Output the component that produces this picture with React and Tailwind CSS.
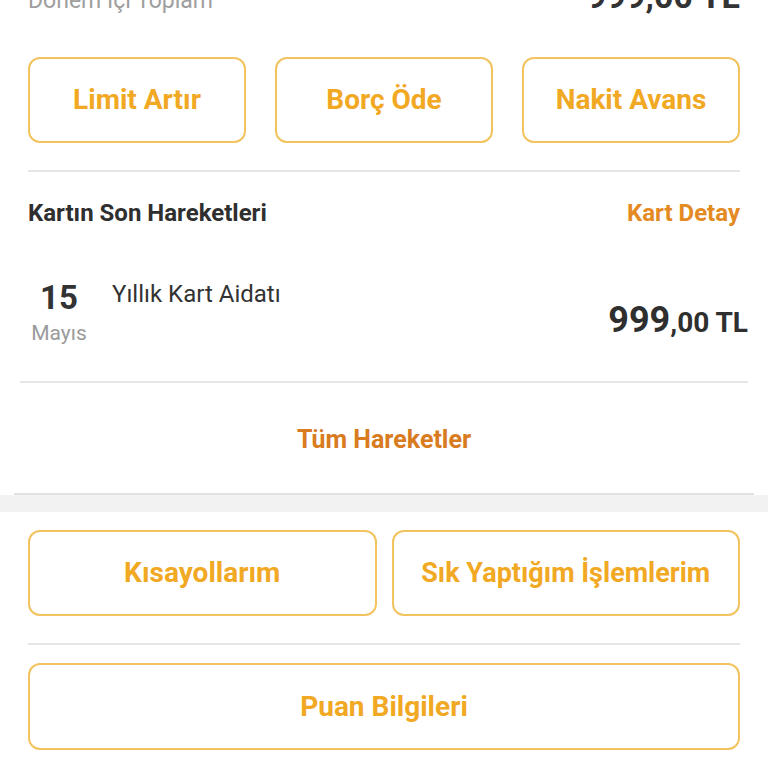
export default function App() {
  const font = { fontFamily: "Roboto, 'Noto Sans', sans-serif" };
  const btn =
    "flex items-center justify-center rounded-[12px] border-2 border-[#f2c35e] bg-white font-bold text-[#f1a823]";

  return (
    <div className="w-[768px] h-[768px] overflow-hidden bg-white" style={font}>
      <div className="px-7">
        <div className="flex items-end justify-between h-[16px] -mt-[4px]">
          <span className="text-[23px] leading-[26px] text-[#9e9e9e] translate-y-[2px]">Dönem İçi Toplam</span>
          <span className="text-[34px] leading-[38px] font-bold text-[#333] translate-y-[3px]">999,00 TL</span>
        </div>

        <div className="grid grid-cols-3 gap-[29px] mt-[45px]">
          <button className={`${btn} h-[86px] text-[28px]`}>Limit Artır</button>
          <button className={`${btn} h-[86px] text-[28px]`}>Borç Öde</button>
          <button className={`${btn} h-[86px] text-[28px]`}>Nakit Avans</button>
        </div>

        <div className="h-[2px] bg-[#e6e6e6] mt-[27px]" />

        <div className="flex items-center justify-between mt-[27px]">
          <span className="text-[24px] leading-[28px] font-bold text-[#2f2f2f]">Kartın Son Hareketleri</span>
          <span className="text-[24px] leading-[28px] font-bold text-[#e48a22]">Kart Detay</span>
        </div>
      </div>

      <div className="px-5">
        <div className="flex mt-[53px] pb-[34px] border-b-2 border-[#e6e6e6]">
          <div className="w-[78px] flex flex-col items-center">
            <span className="text-[33px] leading-[36px] font-bold text-[#333]">15</span>
            <span className="text-[21px] leading-[26px] text-[#9a9a9a] mt-[4px]">Mayıs</span>
          </div>
          <div className="flex-1 flex justify-between pl-[14px]">
            <span className="text-[24px] leading-[28px] text-[#333]">Yıllık Kart Aidatı</span>
            <span className="self-start mt-[20px] leading-[40px] text-[#2f2f2f] font-bold">
              <span className="text-[36px]">999</span>
              <span className="text-[28px]">,00 TL</span>
            </span>
          </div>
        </div>
      </div>

      <div className="flex justify-center items-center h-[110px] pt-1">
        <span className="text-[25px] font-bold text-[#d97b1f]">Tüm Hareketler</span>
      </div>
      <div className="px-[14px]">
        <div className="h-[2px] bg-[#e2e2e2]" />
      </div>
      <div className="h-[17px] bg-[#f2f2f2]" />

      <div className="px-7">
        <div className="grid grid-cols-2 gap-[15px] mt-[18px]">
          <button className={`${btn} h-[86px] text-[28px]`}>Kısayollarım</button>
          <button className={`${btn} h-[86px] text-[27px]`}>Sık Yaptığım İşlemlerim</button>
        </div>
        <div className="h-[2px] bg-[#e6e6e6] mt-[27px]" />
        <button className={`${btn} w-full h-[87px] mt-[18px] text-[28px]`}>Puan Bilgileri</button>
      </div>
    </div>
  );
}
